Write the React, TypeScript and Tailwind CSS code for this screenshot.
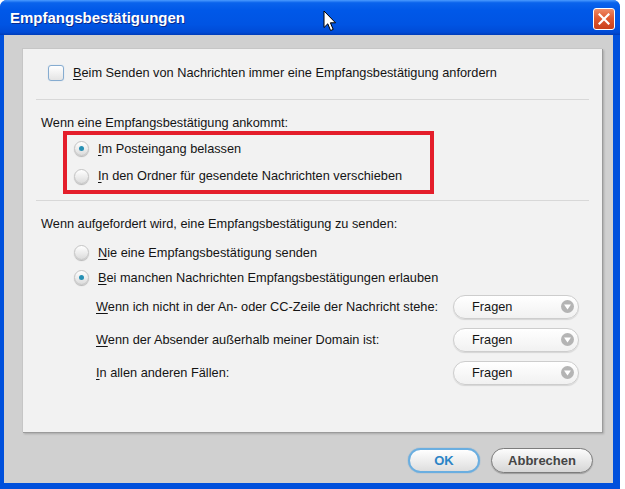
import type { ReactNode } from "react";

const FONT = { fontFamily: '"Liberation Sans", Arial, sans-serif' };

function Acc({ first, rest }: { first: string; rest: string }) {
  return (
    <span>
      <span className="underline underline-offset-2">{first}</span>
      {rest}
    </span>
  );
}

function Radio({ checked }: { checked?: boolean }) {
  return (
    <span className="flex h-[15px] w-[15px] shrink-0 items-center justify-center rounded-full border border-[#c4c4c4] bg-[linear-gradient(to_bottom,#ffffff,#dcdcdc)] shadow-[0_1px_1px_rgba(0,0,0,0.25)]">
      {checked && <span className="h-[5px] w-[5px] rounded-full bg-[#2790b4]" />}
    </span>
  );
}

function RadioRow({ checked, height, children }: { checked?: boolean; height: string; children: ReactNode }) {
  return (
    <div className={`flex items-center gap-[9px] ${height}`}>
      <Radio checked={checked} />
      <span>{children}</span>
    </div>
  );
}

function Dropdown() {
  return (
    <div className="flex h-[24px] w-[126px] items-center justify-between rounded-full border border-[#cdcdcd] bg-[linear-gradient(to_bottom,#ffffff,#f1f1f1)] pl-[18px] pr-[4px] shadow-[0_1px_1px_rgba(0,0,0,0.12)]">
      <span>Fragen</span>
      <span className="flex h-[13px] w-[13px] items-center justify-center rounded-full bg-[#b4b4b4]">
        <svg width="7" height="6" viewBox="0 0 7 6">
          <path d="M0 0.5 H7 L3.5 5.5 Z" fill="#ffffff" />
        </svg>
      </span>
    </div>
  );
}

function RuleRow({ label }: { label: ReactNode }) {
  return (
    <div className="flex h-[33px] items-center justify-between pl-[73px] pr-[23px]">
      <span>{label}</span>
      <Dropdown />
    </div>
  );
}

function TitleBar() {
  return (
    <div className="flex h-[35px] shrink-0 items-center justify-between bg-[linear-gradient(to_bottom,#4b9bff_0%,#0a63ec_8%,#0058e8_30%,#0054e3_70%,#004bd6_92%,#003cb8_100%)] pl-[10px] pr-[5px] pt-[2px]">
      <span
        className="text-[15px] font-bold text-white [text-shadow:1px_1px_0_#0b2a8c]"
        style={{ fontFamily: '"Liberation Sans", Arial, sans-serif' }}
      >
        Empfangsbestätigungen
      </span>
      <button
        type="button"
        className="flex h-[22px] w-[22px] items-center justify-center rounded-[3px] border border-white bg-[linear-gradient(to_bottom,#ee8a66,#e05a32_45%,#c9401c)]"
      >
        <svg width="12" height="12" viewBox="0 0 12 12">
          <path d="M1.5 1.5 L10.5 10.5 M10.5 1.5 L1.5 10.5" stroke="#ffffff" strokeWidth="2.2" strokeLinecap="square" />
        </svg>
      </button>
    </div>
  );
}

function Cursor() {
  return (
    <svg className="absolute left-[323px] top-[10px]" width="14" height="23" viewBox="0 0 14 23">
      <path
        d="M1 1 L1 17.5 L4.8 13.8 L7.6 20.5 L10.2 19.4 L7.4 12.8 L12.5 12.8 Z"
        fill="#ffffff"
        stroke="#000000"
        strokeWidth="1"
        strokeLinejoin="miter"
      />
    </svg>
  );
}

export default function App() {
  return (
    <div className="relative h-[489px] w-[625px] bg-white text-[12.75px] text-[#141414]" style={FONT}>
      <div className="flex h-[489px] w-[620px] flex-col overflow-hidden rounded-t-[7px] bg-[#0050dc]">
        <TitleBar />
        <div className="mb-[6px] ml-[4px] mr-[7px] flex flex-1 flex-col bg-[#d0d0d0]">
          <section className="ml-[18px] mt-[13px] h-[384px] w-[580px] border-l border-t border-[#c6c6c6] bg-[#f2f2f2] shadow-[1px_1px_0_#9b9b9b,2px_2px_2px_rgba(0,0,0,0.2)]">
            <div className="flex h-[48px] items-center gap-[9px] pl-[25px]">
              <span className="h-[16px] w-[16px] rounded-[3px] border border-[#86acd0] bg-[linear-gradient(to_bottom,#ffffff,#e4e4e4)] shadow-[0_0_1px_#a8c8e6]" />
              <Acc first="B" rest="eim Senden von Nachrichten immer eine Empfangsbestätigung anfordern" />
            </div>
            <div className="mx-[13px] mt-[2px] h-px bg-[#d8d8d8]" />

            <div className="mt-[15px] h-[16px] pl-[18px] leading-[16px]">Wenn eine Empfangsbestätigung ankommt:</div>
            <div className="ml-[40px] w-[371px] border-4 border-[#e41e2b] pl-[7px]">
              <RadioRow checked height="h-[27px]">
                <Acc first="I" rest="m Posteingang belassen" />
              </RadioRow>
              <RadioRow height="h-[28px]">
                <Acc first="I" rest="n den Ordner für gesendete Nachrichten verschieben" />
              </RadioRow>
            </div>
            <div className="mx-[13px] mt-[6px] h-px bg-[#d8d8d8]" />

            <div className="mt-[15px] h-[16px] pl-[18px] leading-[16px]">Wenn aufgefordert wird, eine Empfangsbestätigung zu senden:</div>
            <div className="mt-[8px] pl-[51px]">
              <RadioRow height="h-[25px]">
                <Acc first="N" rest="ie eine Empfangsbestätigung senden" />
              </RadioRow>
              <RadioRow checked height="h-[25px]">
                <Acc first="B" rest="ei manchen Nachrichten Empfangsbestätigungen erlauben" />
              </RadioRow>
            </div>
            <RuleRow label={<Acc first="W" rest="enn ich nicht in der An- oder CC-Zeile der Nachricht stehe:" />} />
            <RuleRow label={<Acc first="W" rest="enn der Absender außerhalb meiner Domain ist:" />} />
            <RuleRow label={<Acc first="I" rest="n allen anderen Fällen:" />} />
          </section>

          <div className="mt-[16px] flex justify-end gap-[11px] pr-[20px]">
            <button
              type="button"
              className="h-[25px] w-[72px] rounded-full border-2 border-[#6aaee0] bg-[linear-gradient(to_bottom,#ffffff,#dedede)] text-[13px] font-bold text-[#2b84c6] shadow-[0_0_1px_#3d8fd0]"
            >
              OK
            </button>
            <button
              type="button"
              className="h-[25px] w-[102px] rounded-full border border-[#7c7c7c] bg-[linear-gradient(to_bottom,#fcfcfc,#d6d6d6)] text-[13px] font-bold text-[#454545] shadow-[0_1px_1px_rgba(0,0,0,0.25)]"
            >
              Abbrechen
            </button>
          </div>
        </div>
      </div>
      <Cursor />
    </div>
  );
}
